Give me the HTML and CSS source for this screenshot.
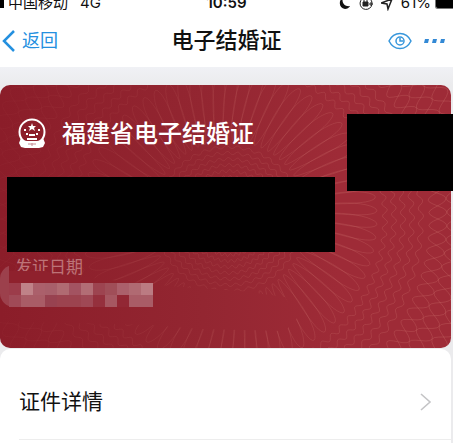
FILE: index.html
```html
<!DOCTYPE html>
<html lang="zh-CN">
<head>
<meta charset="utf-8">
<meta name="viewport" content="width=device-width, initial-scale=1">
<title>电子结婚证</title>
<link rel="stylesheet" href="styles.css">
</head>
<body>
<div class="status">
  <div class="status-side"><span class="signal"></span><span>中国移动</span><span class="network">4G</span></div>
  <div class="clock">10:59</div>
  <div class="status-side status-end">
    <svg width="12" height="16" viewBox="0 0 12 16"><path d="M4 2C-1 6 0 13 6 14c2 0 4-1 5-3C6 12 2 8 4 2Z" fill="#111"/></svg>
    <svg width="14" height="16" viewBox="0 0 14 16" fill="none" stroke="#222"><path d="M3 4a6 6 0 1 0 9 1M10 9h4M12 7v4"/><path d="M4 7h5v4H4z" fill="#222"/><path d="M5 7V4h3v3"/></svg>
    <svg width="12" height="16" viewBox="0 0 12 16"><path d="M0 8 11 4 7 14 6 9Z" fill="none" stroke="#222" stroke-width="1.5"/></svg>
    <span class="percent">61%</span>
    <span class="battery"></span>
  </div>
</div>
<header class="nav">
  <a class="back" href="#">
    <svg width="16" height="22" viewBox="0 0 16 22"><path d="M14 1 4 11l10 10" fill="none" stroke="#2490df" stroke-width="2.5"/></svg>
    <span>返回</span>
  </a>
  <h1>电子结婚证</h1>
  <div class="actions">
    <button type="button" aria-label="显示">
      <svg width="24" height="18" viewBox="0 0 24 18" fill="none" stroke="#3696db" stroke-width="1.5"><path d="M1 9C6-1 18-1 23 9 18 19 6 19 1 9Z"/><circle cx="12" cy="9" r="4"/><path d="M12 6v3h3"/></svg>
    </button>
    <button type="button" aria-label="更多">
      <svg width="22" height="6" viewBox="0 0 22 6" fill="#3389d5"><path d="M1 1h4l-1 4H0zM9 1h4l-1 4H8zM17 1h4l-1 4h-4z"/></svg>
    </button>
  </div>
</header>
<main>
  <section class="card">
    <svg class="guilloche" viewBox="0 0 451 263" preserveAspectRatio="xMaxYMid slice" aria-hidden="true">
      <defs>
        <linearGradient id="fade"><stop offset="0" stop-color="#fff" stop-opacity=".15"/><stop offset=".45" stop-color="#fff" stop-opacity=".5"/><stop offset="1" stop-color="#fff"/></linearGradient>
        <mask id="mask"><rect width="451" height="263" fill="url(#fade)"/><path d="M0 186 60 190 180 202 240 206 285 212 298 232 285 246 200 244 150 240 0 236Z" fill="#000"/></mask>
      </defs>
      <g mask="url(#mask)"><g id="lines" fill="none" stroke="#d98078" stroke-opacity=".32" stroke-width=".8"></g></g>
    </svg>
    <div class="card-title">
      <svg width="28" height="32" viewBox="0 0 28 32" aria-hidden="true">
        <circle cx="14" cy="14" r="12.5" fill="none" stroke="#fff" stroke-width="2"/>
        <path d="M3 20c3 2 4 3 6 3h10c2 0 3-1 6-3l2 5-2 4-4 1H7l-4-1-2-4Z" fill="#fff"/>
        <path d="m14 5 1 3h3l-2 2 1 3-3-2-3 2 1-3-2-2h3ZM6 11h2v2H6zM20 11h2v2h-2zM8 15h2v2H8zM18 15h2v2h-2zM11 16h6v2h-6zM9 20h10v2H9z" fill="#fff"/>
        <path d="M10 26h8M14 25v3" stroke="#c48a91" fill="none"/>
      </svg>
      <h2>福建省电子结婚证</h2>
    </div>
    <div class="redaction"></div>
    <div class="date-label">发证日期</div>
    <div class="mosaic" id="mosaic"></div>
    <div class="redaction-side"></div>
  </section>
  <section class="panel">
    <a class="row" href="#">
      <span>证件详情</span>
      <svg width="12" height="20" viewBox="0 0 12 20"><path d="m1 2 9 8-9 8" fill="none" stroke="#c4c4c6" stroke-width="1.6"/></svg>
    </a>
  </section>
</main>
<script src="card.js"></script>
</body>
</html>
```
FILE: styles.css
```css
* { box-sizing: border-box; }
body {
  margin: 0;
  min-height: 100vh;
  display: flex;
  flex-direction: column;
  overflow: hidden;
  background: #fff;
  color: #111;
  font-family: "Liberation Sans", "Noto Sans CJK SC", sans-serif;
}
h1, h2 { margin: 0; font-weight: 500; }
a { color: inherit; text-decoration: none; }
svg { display: block; flex: none; }
.status {
  display: grid;
  grid-template-columns: 1fr auto 1fr;
  align-items: center;
  height: 6px;
  margin-bottom: 8px;
  font-size: 15px;
  line-height: 6px;
}
.status-side { display: flex; align-items: center; height: 6px; white-space: nowrap; }
.status-end { justify-content: flex-end; gap: 8px; }
.signal { width: 4px; height: 10px; margin-right: 4px; background: #000; }
.network { margin-left: 12px; font-family: Inter, sans-serif; }
.clock { font: 600 15px/6px Inter, sans-serif; }
.percent { font: 15px/6px Inter, sans-serif; }
.battery { width: 18px; height: 12px; margin-left: -4px; background: #000; border: 1px solid #777; border-right: 0; border-radius: 3px 0 0 3px; }
.nav {
  display: grid;
  grid-template-columns: 1fr auto 1fr;
  align-items: center;
  height: 53px;
}
.nav h1 { font-size: 22px; line-height: 32px; }
.back { display: flex; align-items: center; gap: 6px; color: #2490df; font-size: 18px; line-height: 26px; }
.actions { display: flex; justify-content: flex-end; align-items: center; gap: 12px; padding-right: 7px; }
button { padding: 0; border: 0; background: none; }
main { flex: 1; display: flex; flex-direction: column; padding: 18px 2px 0 0; background: linear-gradient(#f0f1f5, #ebebed 18px); }
.card {
  position: relative;
  padding: 31px 7px 41px;
  border-radius: 10px;
  background: linear-gradient(90deg, #8b1d29, #932631 45%, #9e2b37 75%, #9e2b37);
}
.guilloche { position: absolute; inset: 0; width: 100%; height: 100%; border-radius: 10px; }
.card-title { position: relative; display: flex; align-items: center; gap: 16px; height: 36px; padding-left: 11px; color: #fff; }
.card-title h2 { font-size: 24px; line-height: 36px; }
.redaction { position: relative; width: 75%; height: 75px; margin-top: 25px; background: #000; }
.date-label { position: relative; margin-top: 6px; padding-left: 8px; color: #bd7378; font-size: 17px; line-height: 20px; }
.date-label::after {
  content: "";
  position: absolute;
  left: -7px;
  top: 7px;
  width: 90px;
  height: 42px;
  background: linear-gradient(90deg, #9c404c 9px, #8f212d 9px);
  border-radius: 14px 0 0 14px;
  clip-path: polygon(0 0, 9px 0, 9px 6px, 45px 6px, 60px 11px, 90px 12px, 90px 100%, 0 100%);
}
.mosaic { position: relative; display: grid; grid-template-columns: repeat(12, 12px); grid-auto-rows: 12px; margin: 5px 0 0 2px; }
.redaction-side { position: absolute; right: -2px; top: 29px; width: 106px; height: 77px; background: #000; }
.panel { flex: 1; margin-top: 1px; padding-left: 19px; border-radius: 10px 10px 0 0; background: #fff; }
.row { display: flex; justify-content: space-between; align-items: center; padding: 37px 19px 21px 0; border-bottom: 1px solid #ededed; font-size: 21px; line-height: 32px; }
```
FILE: card.js
```js
const lines = document.getElementById("lines");
const cx = 229, cy = 134;

function addPath(d) {
  const path = document.createElementNS("http://www.w3.org/2000/svg", "path");
  path.setAttribute("d", d);
  lines.appendChild(path);
}

// Closed wave around the rosette centre.
function ring(radius, amplitude, waves, phase) {
  let d = "";
  const steps = waves * 12;
  for (let i = 0; i <= steps; i++) {
    const t = i / steps * Math.PI * 2;
    const r = radius + amplitude * Math.sin(waves * t + phase);
    d += (i ? "L" : "M") + (cx + r * Math.cos(t)).toFixed(1) + " " + (cy + r * Math.sin(t)).toFixed(1);
  }
  addPath(d + "Z");
}

for (let i = 0; i < 7; i++) ring(36 + i * 6, 1.5, 40, i * 0.5);
for (let i = 0; i < 5; i++) ring(156 + i * 9, 2.5, 80, i * 0.7);
for (const r of [209, 227, 245]) {
  ring(r, 9, 50, 0);
  ring(r, 9, 50, Math.PI);
}

// Long overlapping petals between the inner and outer waves.
for (let n = 0; n < 68; n++) {
  const a = n / 68 * Math.PI * 2;
  let d = "";
  for (let i = 0; i <= 32; i++) {
    const t = i / 32 * Math.PI * 2;
    const r = 113 + 35 * Math.cos(t);
    const b = a + 0.05 * Math.sin(t) + 0.035 * Math.cos(t);
    d += (i ? "L" : "M") + (cx + r * Math.cos(b)).toFixed(1) + " " + (cy + r * Math.sin(b)).toFixed(1);
  }
  addPath(d + "Z");
}

const shades = [
  "#9c3c4a", "#bf8288", "#ab606b", "#a85f6a", "#b06b72", "#a35361", "#b26d75", "#9d4450", "#a04e58", "#ab606b", "#b06a72", "#bb7b82",
  "#a04a57", "#a95c66", "#a95c66", "#984250", "#9c434f", "#9c434f", "#9f4855", "#95303d", "#a65761", "#922734", "#a95c66", "#a95c66"
];
const mosaic = document.getElementById("mosaic");
for (const shade of shades) {
  const cell = document.createElement("span");
  cell.style.background = shade;
  mosaic.appendChild(cell);
}
```
